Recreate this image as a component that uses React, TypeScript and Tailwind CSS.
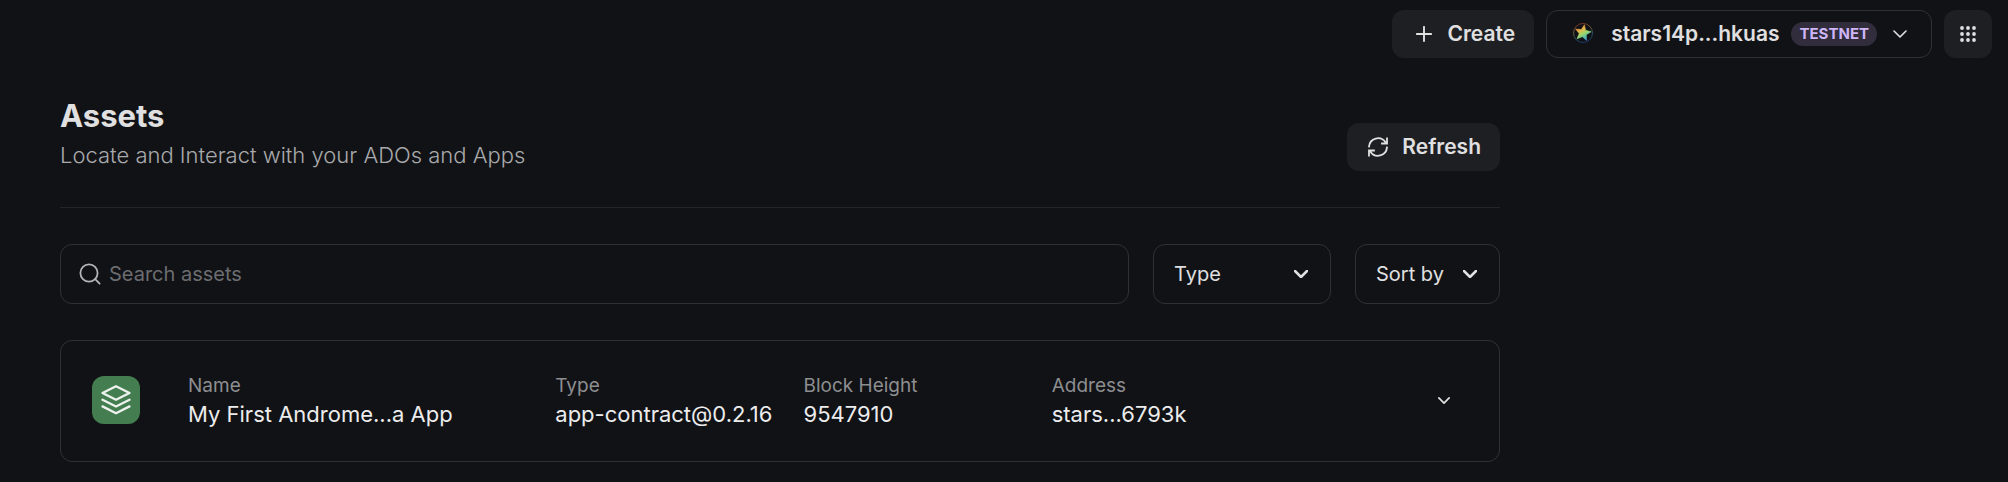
import { useState } from "react";
import type { ReactNode } from "react";

function Chevron({ className, width }: { className: string; width: number }) {
  return (
    <svg
      viewBox="0 0 14 8"
      className={className}
      fill="none"
      stroke="currentColor"
      strokeWidth={width}
      strokeLinecap="round"
      strokeLinejoin="round"
      aria-hidden="true"
    >
      <path d="M1 1l6 6 6-6" />
    </svg>
  );
}

function StargazeLogo() {
  return (
    <svg viewBox="0 0 24 24" className="size-6" aria-hidden="true">
      <defs>
        <linearGradient id="star-fill" x1="0.2" y1="0" x2="0.75" y2="1">
          <stop offset="0" stopColor="#ef6a3c" />
          <stop offset="0.3" stopColor="#e8b44a" />
          <stop offset="0.55" stopColor="#9fd86a" />
          <stop offset="0.8" stopColor="#4fb8b0" />
          <stop offset="1" stopColor="#3f7fd8" />
        </linearGradient>
        <linearGradient id="ring-fill" x1="0.3" y1="0" x2="0.6" y2="1">
          <stop offset="0" stopColor="#7a2f22" />
          <stop offset="0.35" stopColor="#6a5e34" />
          <stop offset="0.65" stopColor="#28565e" />
          <stop offset="1" stopColor="#1b3168" />
        </linearGradient>
      </defs>
      <circle cx="12" cy="12" r="9.5" fill="none" stroke="url(#ring-fill)" strokeWidth="1" />
      <path
        d="M13.4 3.8L14.6 9.2 20.2 10.8 15.3 13.7 15.6 19.5 11.4 15.7 6 17.8 8.2 12.5 4.7 8.1 10.3 8.6z"
        fill="url(#star-fill)"
        stroke="url(#star-fill)"
        strokeWidth="0.6"
        strokeLinejoin="round"
      />
    </svg>
  );
}

function DotGrid() {
  const stops = [3, 9, 15];
  return (
    <svg viewBox="0 0 18 18" className="size-[18px]" fill="currentColor" aria-hidden="true">
      {stops.map((y) => stops.map((x) => <circle key={`${x}-${y}`} cx={x} cy={y} r="1.9" />))}
    </svg>
  );
}

function Header() {
  return (
    <header className="flex justify-end gap-3 px-4 pt-[10px]">
      <button
        type="button"
        className="flex h-12 items-center gap-4 rounded-xl bg-[#1e1f23] pr-[19px] pl-6 text-[21px] font-semibold"
      >
        <svg viewBox="0 0 16 16" className="size-4" stroke="currentColor" strokeWidth="1.9" strokeLinecap="round" aria-hidden="true">
          <path d="M8 .9v14.2M.9 8h14.2" />
        </svg>
        Create
      </button>
      <button
        type="button"
        className="flex h-12 items-center gap-3 rounded-xl border border-[#303135] px-6 text-[21px] font-semibold"
      >
        <span className="mr-1 pb-[2px]">
          <StargazeLogo />
        </span>
        stars14p...hkuas
        <span className="rounded-full bg-[#312d3d] px-2 text-[15px] leading-6 font-bold text-[#ceb6f8]">
          TESTNET
        </span>
        <Chevron className="ml-1 h-2 w-[14px]" width={1.6} />
      </button>
      <button
        type="button"
        aria-label="Apps"
        className="flex size-12 items-center justify-center rounded-xl bg-[#1e1f23]"
      >
        <DotGrid />
      </button>
    </header>
  );
}

function Picker({ label, className }: { label: string; className: string }) {
  return (
    <div className={`relative ${className}`}>
      <select
        aria-label={label}
        className="h-[60px] w-full appearance-none rounded-xl border border-[#303135] bg-transparent pr-12 pl-5 text-[20px]"
      >
        <option>{label}</option>
      </select>
      <Chevron className="pointer-events-none absolute top-[26px] right-[23px] h-2 w-[14px]" width={2.5} />
    </div>
  );
}

function Field({ label, children }: { label: string; children: ReactNode }) {
  return (
    <div>
      <dt className="text-[19px] leading-7 text-[#8d8e90]">{label}</dt>
      <dd className="text-[22px] leading-7 whitespace-nowrap text-[#ececed]">{children}</dd>
    </div>
  );
}

function AssetCard() {
  const [open, setOpen] = useState(false);
  return (
    <article className="mt-9 flex items-center rounded-xl border border-[#303135] px-[31px] pt-[31px] pb-[33px]">
      <span className="flex size-12 shrink-0 items-center justify-center rounded-xl bg-[#437d50]">
        <svg
          viewBox="0 0 30 30"
          className="size-[30px]"
          fill="none"
          stroke="#eef2ee"
          strokeWidth="2.3"
          strokeLinecap="round"
          strokeLinejoin="round"
          aria-hidden="true"
        >
          <path d="M15 1.2L28.5 8 15 14.8 1.5 8z" />
          <path d="M1.5 14.8L15 21.5l13.5-6.7" />
          <path d="M1.5 21.4L15 28.2l13.5-6.8" />
        </svg>
      </span>
      <dl className="ml-12 grid flex-1 grid-cols-[367fr_248fr_248fr_368fr]">
        <Field label="Name">My First Androme...a App</Field>
        <Field label="Type">app-contract@0.2.16</Field>
        <Field label="Block Height">9547910</Field>
        <Field label="Address">stars...6793k</Field>
      </dl>
      <button
        type="button"
        aria-label="Show details"
        aria-expanded={open}
        onClick={() => setOpen(!open)}
        className="flex size-12 items-center justify-center"
      >
        <Chevron className="h-[7px] w-3" width={2} />
      </button>
    </article>
  );
}

export default function App() {
  return (
    <div className="min-h-screen bg-[#111216] font-['Inter',sans-serif] text-[#e0e0e1]">
      <Header />
      <main className="max-w-[1500px] pt-[38px] pl-[60px]">
        <div className="flex items-end justify-between border-b border-[#242529] pb-9">
          <div className="flex flex-col gap-[3px]">
            <h1 className="text-[31px] leading-10 font-bold">Assets</h1>
            <p className="text-[22px] leading-8 font-light text-[#a9aaac]">Locate and Interact with your ADOs and Apps</p>
          </div>
          <button
            type="button"
            className="flex h-12 items-center gap-3 rounded-xl bg-[#1e1f23] px-[19px] text-[21px] font-semibold"
          >
            <svg
              viewBox="0 0 24 24"
              className="size-6"
              fill="none"
              stroke="currentColor"
              strokeWidth="1.8"
              strokeLinecap="square"
              aria-hidden="true"
            >
              <path d="M3 11.5a9 9 0 0 1 16.500-4.200L21 8M21 3.500V8.500H16" />
              <path d="M21 12.500a9 9 0 0 1-16.500 4.200L3 16M3 20.500V15.500H8" />
            </svg>
            Refresh
          </button>
        </div>
        <div className="mt-9 flex gap-6">
          <label className="flex h-[60px] flex-1 items-center gap-2 rounded-xl border border-[#303135] px-[18px]">
            <svg viewBox="0 0 22 22" className="size-[22px]" fill="none" stroke="#b4b4b6" strokeWidth="1.8" strokeLinecap="round" aria-hidden="true">
              <circle cx="10" cy="10" r="8.6" />
              <path d="M16.2 16.2l4.4 4.4" />
            </svg>
            <input
              type="search"
              aria-label="Search assets"
              placeholder="Search assets"
              className="flex-1 bg-transparent text-[20px] outline-none placeholder:text-[#6c6d70]"
            />
          </label>
          <Picker label="Type" className="w-[178px]" />
          <Picker label="Sort by" className="w-[145px]" />
        </div>
        <AssetCard />
      </main>
    </div>
  );
}
